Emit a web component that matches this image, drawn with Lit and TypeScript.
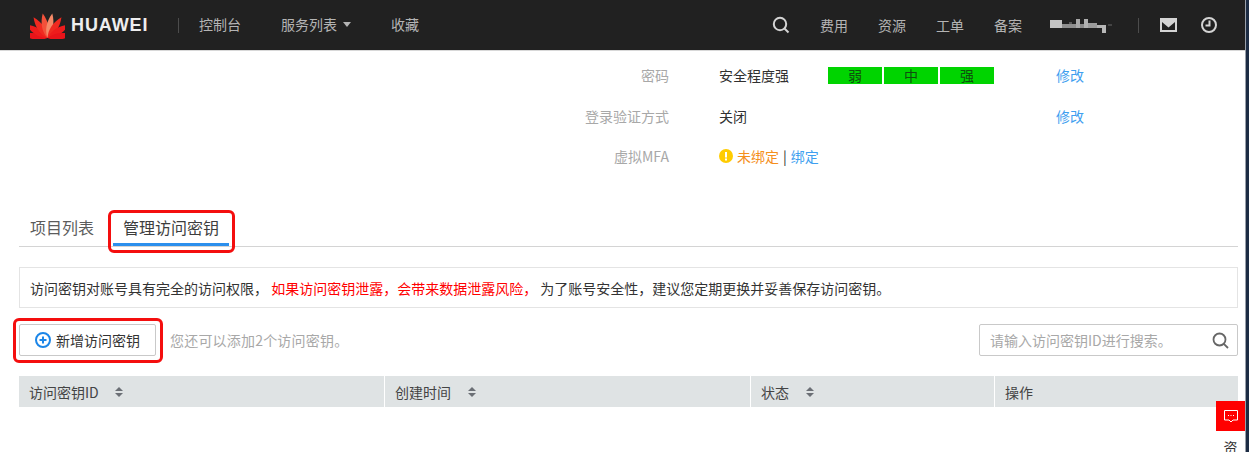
import { LitElement, html, css, svg } from "lit";
import { customElement } from "lit/decorators.js";

const petals: [number, string][] = [
  [-82, "#e8141a"], [-58, "#ee1c1c"], [-34, "#f02a20"], [-11, "#f2513a"],
  [11, "#f58a68"], [34, "#f02a20"], [58, "#ee1c1c"], [82, "#e8141a"],
];
const blur: [number, number, number, number, string][] = [
  [0, 3, 12, 8, "#c4c4c4"], [12, 7, 14, 4, "#8e8e8e"], [19, 5, 3, 2, "#5a5a5a"], [26, 2, 4, 9, "#a8a8a8"],
  [30, 7, 4, 4, "#8a8a8a"], [34, 2, 4, 9, "#b0b0b0"], [38, 6, 9, 5, "#9c9c9c"], [47, 8, 5, 3, "#b4b4b4"],
  [52, 8, 4, 8, "#b8b8b8"], [58, 7, 4, 2, "#444444"],
];

@customElement("app-root")
export class AppRoot extends LitElement {
  static styles = css`
    :host { display: block; height: 452px; position: relative; overflow: hidden; background: #fff;
      font-family: "Noto Sans CJK SC", "Noto Sans", sans-serif; font-size: 14px; color: #252b3a; }
    * { box-sizing: border-box; }
    .nav { height: 51px; background: #212121; border-bottom: 1px solid #d8d8d8; display: flex; align-items: center; color: #b4b4b4; }
    .logo { display: flex; align-items: center; margin-left: 30px; width: 148px; gap: 6px; }
    .logo b { font: bold 18px "Liberation Sans", sans-serif; color: #eee; letter-spacing: .9px; }
    .sep { width: 1px; height: 15px; background: #4c4c4c; }
    .nav-l { display: flex; align-items: center; margin-left: 20px; padding-bottom: 2px; }
    .c1 { width: 82px; }
    .c2 { width: 110px; display: flex; align-items: center; gap: 6px; }
    .caret { width: 0; height: 0; border: 4px solid transparent; border-top: 5px solid #b4b4b4; border-bottom: 0; }
    .spacer { flex: 1; }
    .nav-r { display: flex; align-items: center; margin-right: 32px; }
    .nav-r .t { margin-left: 30px; }
    .nav-r .first { margin-left: 30px; }
    .blur { margin-left: 28px; filter: blur(.5px); }
    .sep-r { margin-left: 24px; margin-right: 21px; }
    .clock { margin-left: 24px; }
    .main { padding: 0 11px 0 19px; }
    .info { padding-top: 4px; height: 149px; }
    .row { display: flex; align-items: center; height: 40.5px; }
    .lbl { width: 650px; text-align: right; color: #a8a8a8; }
    .val { margin-left: 50px; width: 109px; color: #303030; white-space: nowrap; }
    .bars { display: flex; gap: 2px; width: 228px; }
    .bars i { width: 54px; height: 17px; background: #00d400; font-style: normal; text-align: center; line-height: 17px; color: #0f4f0f; }
    .blank { width: 228px; }
    a { color: #3f9ff0; }
    .unb { display: flex; align-items: center; margin-left: 50px; gap: 4px; color: #303030; }
    .unb em { font-style: normal; color: #f58f1c; }
    .tabs { display: flex; height: 47px; border-bottom: 1px solid #d4d4d4; font-size: 16px; padding-left: 11px; color: #5c5c5c; }
    .tab { padding-top: 15px; line-height: 24px; height: 46px; }
    .tab.on { margin-left: 19px; padding-left: 10px; color: #3d3d3d; width: 116px; border-bottom: 3px solid #2b8fed; }
    .redbox { position: absolute; border: 3px solid #f40e0e; border-radius: 6px; pointer-events: none; }
    .rb1 { left: 108px; top: 210px; width: 127px; height: 43px; }
    .rb2 { left: 13px; top: 318px; width: 150px; height: 45px; }
    .notice { margin-top: 20px; height: 41px; border: 1px solid #e4e4e4; padding-left: 10px; display: flex; align-items: center; color: #333; white-space: pre; }
    .notice em { font-style: normal; color: #f00; }
    .tools { display: flex; align-items: center; margin-top: 16px; height: 32px; }
    .btn { width: 137px; height: 32px; border: 1px solid #c9c9c9; border-radius: 2px; display: flex; align-items: center; gap: 5px; padding-left: 15px; color: #333; }
    .hint { margin-left: 14px; color: #a8a8a8; letter-spacing: .2px; }
    .search { margin-left: auto; width: 259px; height: 32px; border: 1px solid #c9c9c9; border-radius: 2px; display: flex; align-items: center; justify-content: space-between; padding: 0 8px 0 10px; color: #a8a8a8; }
    .thead { margin-top: 20px; display: grid; grid-template-columns: 365px 366px 244px 244px; height: 31px; background: #dfe3e4; color: #444; }
    .th { display: flex; align-items: center; padding-left: 10px; border-left: 1px solid #fff; }
    .th:first-child { border-left: 0; }
    .sort { display: flex; flex-direction: column; gap: 2px; margin-left: 17px; }
    .th:first-child .sort { margin-left: 16px; }
    .sort i { width: 0; height: 0; border-left: 4px solid transparent; border-right: 4px solid transparent; }
    .sort .u { border-bottom: 4px solid #6b6f75; }
    .sort .d { border-top: 4px solid #6b6f75; }
    .float { position: absolute; left: 1216px; top: 401px; width: 29px; height: 51px; background: #fff; color: #333; text-align: center; overflow: hidden; }
    .float div { height: 30px; background: #f00; display: flex; align-items: center; justify-content: center; }
    .float span { display: block; margin-top: 6px; font-size: 14px; line-height: 20px; }
    .edge { position: absolute; right: 0; top: 0; width: 4px; height: 452px; background: #1c2c44; border-left: 1px solid #9aa0aa; }
  `;

  sort() { return html`<span class="sort"><i class="u"></i><i class="d"></i></span>`; }

  render() {
    return html`
      <div class="nav">
        <div class="logo">
          <svg width="35" height="27" viewBox="-17.5 -19 35 27" aria-hidden="true">
            ${petals.map(([a, c]) => svg`<path d="M0 7 C-4.2 0 -4.4 -9 0 -18 C4.4 -9 4.2 0 0 7Z" fill="${c}" transform="rotate(${a} 0 7)"/>`)}
          </svg>
          <b>HUAWEI</b>
        </div>
        <div class="sep"></div>
        <div class="nav-l">
          <span class="c1">控制台</span>
          <span class="c2">服务列表<i class="caret"></i></span>
          <span>收藏</span>
        </div>
        <div class="spacer"></div>
        <div class="nav-r">
          <svg width="18" height="18" viewBox="0 0 18 18" fill="none" stroke="#d4d4d4" stroke-width="2" aria-hidden="true"><circle cx="8" cy="8" r="6.2"/><path d="M12.5 12.5 16.5 16.5"/></svg>
          <span class="t first">费用</span>
          <span class="t">资源</span>
          <span class="t">工单</span>
          <span class="t">备案</span>
          <svg class="blur" width="64" height="16" viewBox="0 0 64 16" aria-hidden="true">
            ${blur.map(([x, y, w, h, c]) => svg`<rect x="${x}" y="${y}" width="${w}" height="${h}" fill="${c}"/>`)}
          </svg>
          <div class="sep sep-r"></div>
          <svg width="17" height="14" viewBox="0 0 17 14" aria-hidden="true"><path fill="#d4d4d4" fill-rule="evenodd" d="M0 0H17V14H0ZM2 4V12H15V4L8.5 9.5Z"/></svg>
          <svg class="clock" width="16" height="16" viewBox="0 0 16 16" fill="none" stroke="#d4d4d4" stroke-width="2" aria-hidden="true"><circle cx="8" cy="8" r="7"/><path d="M8.5 3.5V8.5H4.5"/></svg>
        </div>
      </div>
      <div class="main">
        <div class="info">
          <div class="row"><span class="lbl">密码</span><span class="val">安全程度强</span>
            <span class="bars"><i>弱</i><i>中</i><i>强</i></span><a>修改</a></div>
          <div class="row"><span class="lbl">登录验证方式</span><span class="val">关闭</span><span class="blank"></span><a>修改</a></div>
          <div class="row"><span class="lbl">虚拟MFA</span>
            <span class="unb"><svg width="14" height="14" viewBox="0 0 14 14" aria-hidden="true"><circle cx="7" cy="7" r="7" fill="#ffcc00"/><rect x="6" y="3" width="2" height="5.5" fill="#fff"/><rect x="6" y="9.5" width="2" height="2" fill="#fff"/></svg><em>未绑定</em> | <a>绑定</a></span></div>
        </div>
        <div class="tabs"><div class="tab">项目列表</div><div class="tab on">管理访问密钥</div></div>
        <div class="notice">访问密钥对账号具有完全的访问权限， <em>如果访问密钥泄露，会带来数据泄露风险，</em> 为了账号安全性，建议您定期更换并妥善保存访问密钥。</div>
        <div class="tools">
          <div class="btn"><svg width="16" height="16" viewBox="0 0 16 16" aria-hidden="true"><circle cx="8" cy="8" r="7" fill="none" stroke="#1c86e8" stroke-width="2"/><path d="M4.5 8h7M8 4.5v7" stroke="#1c86e8" stroke-width="2"/></svg>新增访问密钥</div>
          <span class="hint">您还可以添加2个访问密钥。</span>
          <div class="search">请输入访问密钥ID进行搜索。<svg width="17" height="17" viewBox="0 0 17 17" fill="none" stroke="#666" stroke-width="1.8" aria-hidden="true"><circle cx="7.5" cy="7.5" r="6"/><path d="M11.8 11.8 16 16"/></svg></div>
        </div>
        <div class="thead">
          <div class="th">访问密钥ID${this.sort()}</div>
          <div class="th">创建时间${this.sort()}</div>
          <div class="th">状态${this.sort()}</div>
          <div class="th">操作</div>
        </div>
      </div>
      <div class="redbox rb1"></div>
      <div class="redbox rb2"></div>
      <div class="float"><div><svg width="16" height="15" viewBox="0 0 16 15" fill="none" stroke="#fff" aria-hidden="true"><path d="M1.5 1.5H14.5V11H10L8 13 6 11H1.5Z"/><path d="M5 6.5h1M7.5 6.5h1M10 6.5h1"/></svg></div><span>资</span></div>
      <div class="edge"></div>
    `;
  }
}
